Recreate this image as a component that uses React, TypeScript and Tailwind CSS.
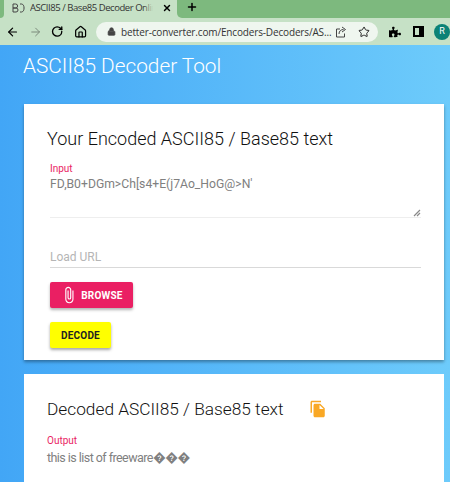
import { Plus, X, ArrowLeft, ArrowRight, RotateCw, Home, Lock, Star } from "lucide-react";
import { MdAttachFile, MdFileCopy } from "react-icons/md";
import { FaPuzzlePiece } from "react-icons/fa";

export default function App() {
  return (
    <div className="w-[450px] h-[482px] overflow-hidden flex flex-col font-['Roboto',sans-serif] bg-gradient-to-r from-[#42a6f6] to-[#6dcbfb]">
      <div className="h-[18px] shrink-0 bg-[#c6e1c6] flex items-stretch">
        <div className="w-[4px] bg-[#7db97e] rounded-br-[5px]" />
        <div className="relative w-[173px] flex items-center pl-[8px] pr-[5px] pb-[3px]">
          <svg width="14" height="10" viewBox="0 0 14 10" className="shrink-0 mr-[4px]">
            <path d="M1 1h2.6a1.8 1.8 0 0 1 0 4H1zM1 5h3a2 2 0 0 1 0 4H1zM8 1h1.5c3.4 0 3.4 8 0 8H8" fill="none" stroke="#444" strokeWidth="1" />
          </svg>
          <span className="relative w-[126px] overflow-hidden whitespace-nowrap text-[9.5px] leading-[12px] text-[#333] font-['Open_Sans',sans-serif] tracking-[-0.45px]">
            ASCII85 / Base85 Decoder Online
            <span className="absolute right-0 top-0 bottom-0 w-[10px] bg-gradient-to-r from-transparent to-[#c6e1c6]" />
          </span>
          <X className="w-[10px] h-[10px] ml-[9px] text-black shrink-0" strokeWidth={3.4} />
        </div>
        <div className="flex-1 bg-[#7db97e] rounded-bl-[5px] flex items-center pl-[9px] pb-[4px]">
          <Plus className="w-[12px] h-[12px] text-black" strokeWidth={3} />
        </div>
      </div>
      <div className="h-[27px] shrink-0 bg-[#c6e1c6] flex items-center pl-[6px]">
        <ArrowLeft className="w-[14px] h-[14px] text-black" strokeWidth={2.2} />
        <ArrowRight className="w-[14px] h-[14px] ml-[10px] text-[#7b8a7b]" strokeWidth={1.8} />
        <RotateCw className="w-[13px] h-[13px] ml-[9px] text-black" strokeWidth={2.6} />
        <Home className="w-[14px] h-[14px] ml-[10px] text-black" strokeWidth={2.2} />
        <div className="ml-[9px] w-[282px] h-[20px] shrink-0 rounded-full bg-[#eff6ef] flex items-center pl-[11px] pr-[7px]">
          <Lock className="w-[9px] h-[9px] text-[#444] shrink-0" fill="#444" strokeWidth={2} />
          <span className="ml-[5px] w-[210px] shrink-0 text-[10px] leading-none whitespace-nowrap text-[#333] font-['Open_Sans',sans-serif] tracking-[-0.15px]">better-converter.com/Encoders-Decoders/AS...</span>
          <svg width="12" height="12" viewBox="0 0 12 12" className="ml-[4px] shrink-0" fill="none" stroke="#444" strokeWidth="1">
            <path d="M5 3H1.5v8h8V7.5" />
            <path d="M4 8c0-3 2-4.500 4.500-4.500M7 1l3.500 2.500L7 6" />
          </svg>
          <Star className="w-[12px] h-[12px] ml-[11px] text-[#222] shrink-0" strokeWidth={2} />
        </div>
        <FaPuzzlePiece className="w-[12px] h-[12px] ml-[11px] text-black shrink-0" />
        <div className="w-[11px] h-[11px] ml-[12px] shrink-0 border-2 border-black border-r-[5px]" />
        <div className="w-[16px] h-[16px] ml-[10px] shrink-0 rounded-full bg-[#0b8276] text-white text-[9px] flex items-center justify-center">R</div>
      </div>
      <h1 className="pl-[23px] pt-[8px] h-[59px] shrink-0 text-[20.8px] leading-[26px] font-light text-white">ASCII85 Decoder Tool</h1>
      <div className="pl-[24px] flex flex-col gap-[14px]">
        <div className="w-[420px] h-[256px] shrink-0 bg-white shadow-[0_2px_3px_rgba(0,0,0,0.35)] pt-[23px] pl-[26px] pr-[23px]">
          <h2 className="-ml-[3px] text-[18px] leading-[24px] font-light text-[#111]">Your Encoded ASCII85 / Base85 text</h2>
          <div className="mt-[12px] text-[10px] leading-[12px] text-[#e91e63]">Input</div>
          <div className="relative h-[43px] pt-[2px] border-b border-[#eeeeee]">
            <div className="text-[12.2px] leading-[15px] text-[#808080] whitespace-nowrap">FD,B0+DGm&gt;Ch[s4+E(j7Ao_HoG@&gt;N'</div>
            <svg className="absolute right-0 bottom-0" width="8" height="8" viewBox="0 0 8 8">
              <path d="M7 1 1 7M7 4 4 7" stroke="#888" strokeWidth="1.2" />
            </svg>
          </div>
          <div className="mt-[29px] h-[21px] border-b border-[#d9d9d9] text-[12px] leading-[20px] text-[#b5b5b5]">Load URL</div>
          <button className="mt-[14px] w-[83px] h-[26px] rounded-[2px] bg-[#ea1f63] shadow-[0_2px_3px_rgba(0,0,0,0.3)] flex items-center justify-center gap-[3px] text-white text-[10px] font-bold tracking-[0.2px]">
            <MdAttachFile className="w-[18px] h-[18px]" />
            BROWSE
          </button>
          <button className="mt-[14px] w-[61px] h-[26px] rounded-[2px] bg-[#ffff00] shadow-[0_2px_3px_rgba(0,0,0,0.35)] text-[#222] text-[10px] font-bold tracking-[0.2px] flex items-center justify-center">DECODE</button>
        </div>
        <div className="w-[420px] h-[200px] shrink-0 bg-white pt-[23px] px-[23px]">
          <div className="flex items-center h-[24px]">
            <h2 className="text-[17.3px] leading-[24px] font-light text-[#111]">Decoded ASCII85 / Base85 text</h2>
            <MdFileCopy className="ml-[25px] w-[18px] h-[18px] text-[#f9a825]" />
          </div>
          <div className="mt-[14px] text-[10px] leading-[12px] text-[#e91e63]">Output</div>
          <div className="mt-[3px] text-[12.5px] leading-[16px] tracking-[-0.55px] text-[#808080] whitespace-nowrap">this is list of freeware���</div>
        </div>
      </div>
    </div>
  );
}
